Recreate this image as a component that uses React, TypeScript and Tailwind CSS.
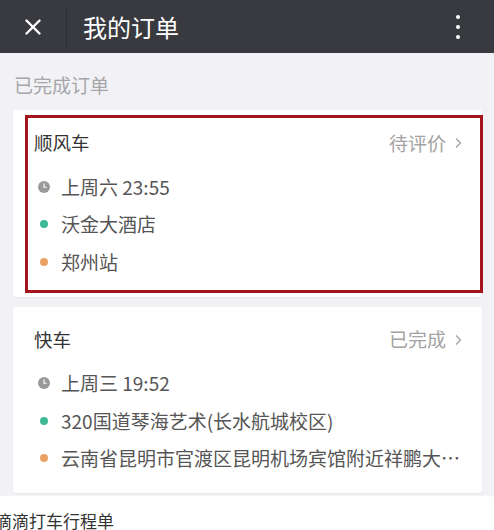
import { X } from "lucide-react";

type Order = {
  kind: string;
  status: string;
  time: string;
  from: string;
  to: string;
  marked?: boolean;
};

const orders: Order[] = [
  { kind: "顺风车", status: "待评价", time: "上周六 23:55", from: "沃金大酒店", to: "郑州站", marked: true },
  {
    kind: "快车",
    status: "已完成",
    time: "上周三 19:52",
    from: "320国道琴海艺术(长水航城校区)",
    to: "云南省昆明市官渡区昆明机场宾馆附近祥鹏大厦停车场入口",
  },
];

function ClockDot() {
  return (
    <svg width="12" height="12" viewBox="0 0 12 12" className="shrink-0">
      <circle cx="6" cy="6" r="6" fill="#9a9a9c" />
      <path d="M6 2.8V6.2H8.2" stroke="#fff" strokeWidth="1.1" fill="none" strokeLinecap="round" />
    </svg>
  );
}

function Row({ dot, text }: { dot: React.ReactNode; text: string }) {
  return (
    <div className="flex h-[37.5px] items-center">
      <div className="flex w-[27px] shrink-0 items-center justify-center pr-[8px]">{dot}</div>
      <span className="min-w-0 truncate text-[19px] text-[#555]">{text}</span>
    </div>
  );
}

function OrderCard({ order }: { order: Order }) {
  return (
    <div className="relative rounded-[3px] bg-white pt-[20px] pb-[16px] pl-[21px] pr-[20px] shadow-[0_1px_2px_rgba(0,0,0,0.05)]">
      <div className="flex h-[26px] items-center justify-between">
        <span className="text-[18.5px] text-[#333]">{order.kind}</span>
        <span className="flex items-center gap-[9px] text-[19px] text-[#a3a3a3]">
          {order.status}
          <svg width="7" height="12" viewBox="0 0 7 12">
            <path d="M1 1.5L5.5 6L1 10.5" stroke="#a3a3a3" strokeWidth="1.3" fill="none" />
          </svg>
        </span>
      </div>
      <div className="mt-[12px]">
        <Row dot={<ClockDot />} text={order.time} />
        <Row dot={<span className="block h-[8px] w-[8px] rounded-full bg-[#3fb896]" />} text={order.from} />
        <Row dot={<span className="block h-[8px] w-[8px] rounded-full bg-[#e9a266]" />} text={order.to} />
      </div>
      {order.marked && (
        <div className="pointer-events-none absolute top-[5px] right-[-1px] bottom-[4px] left-[12px] border-[3px] border-[#a3141c]" />
      )}
    </div>
  );
}

export default function App() {
  return (
    <div
      className="h-[530px] w-[494px] overflow-hidden bg-white"
      style={{ fontFamily: '"Noto Sans CJK SC", "Noto Sans", sans-serif' }}
    >
      <header className="flex h-[53px] items-center bg-[#393a3f]">
        <div className="flex w-[66px] items-center justify-center">
          <X className="h-[26px] w-[26px] text-white" strokeWidth={2.2} />
        </div>
        <div className="h-[40px] w-px bg-[#2c2d31]" />
        <h1 className="ml-[16px] flex-1 text-[24px] text-white">我的订单</h1>
        <div className="mr-[34px] flex flex-col gap-[6px]">
          <span className="block h-[4px] w-[4px] rounded-full bg-white" />
          <span className="block h-[4px] w-[4px] rounded-full bg-white" />
          <span className="block h-[4px] w-[4px] rounded-full bg-white" />
        </div>
      </header>

      <section className="bg-[#f2f2f6] pt-[19px] pb-[2px] pl-[13px] pr-[12px] shadow-[0_1px_1px_rgba(0,0,0,0.04)]">
        <div className="h-[26px] pl-[1px] text-[19px] leading-[26px] text-[#a6a6a8]">已完成订单</div>
        <div className="mt-[12px] flex flex-col gap-[10px]">
          {orders.map((o) => (
            <OrderCard key={o.kind} order={o} />
          ))}
        </div>
      </section>

      <div className="-ml-[5px] pt-[13px] text-[17px] text-[#333]">滴滴打车行程单</div>
    </div>
  );
}
